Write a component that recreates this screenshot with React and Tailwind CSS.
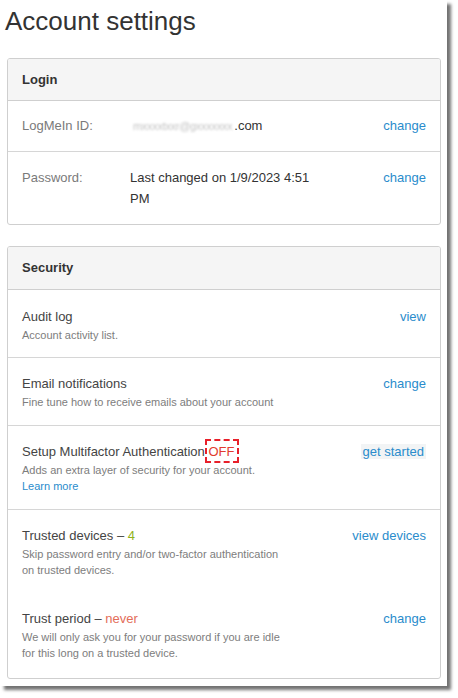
import React from 'react';

// ─── Shared bits ──────────────────────────────────────────────────────────────
const LINK = 'text-[#2a8ccc]';

function Panel({ title, headPad = 'pb-[10px]', children }) {
  return (
    <div className="ml-[7px] w-[434px] rounded-[3px] border border-[#cfcfcf] bg-white overflow-hidden">
      <div
        className={`bg-[#f5f5f5] border-b border-[#cfcfcf] px-[14px] pt-[11px] ${headPad} text-[13px] leading-[20px] font-bold text-[#333]`}
      >
        {title}
      </div>
      {children}
    </div>
  );
}

function LoginRow({ label, value, last }) {
  return (
    <div
      className={`flex items-start px-[14px] pt-[15px] pb-[15px] text-[13px] leading-[20px] ${
        last ? 'leading-[21px]' : 'border-b border-[#d6d6d6]'
      }`}
    >
      <div className="w-[108px] shrink-0 text-[#7a7a7a]">{label}</div>
      <div className="w-[192px] text-[#333]">{value}</div>
      <div className="ml-auto">
        <a className={LINK}>change</a>
      </div>
    </div>
  );
}

function SecRow({ title, desc, action, extra, divider = true, pad = 'pt-[16px] pb-[15px]', actionClass = '' }) {
  return (
    <div
      className={`flex items-start px-[14px] ${pad} text-[13px] leading-[20px] ${
        divider ? 'border-t border-[#d6d6d6]' : ''
      }`}
    >
      <div className="w-[266px]">
        <div className="text-[#444]">{title}</div>
        <div className="text-[11px] leading-[16px] text-[#7d7d7d]">{desc}</div>
        {extra}
      </div>
      <div className="ml-auto">
        <a className={`${LINK} ${actionClass}`}>{action}</a>
      </div>
    </div>
  );
}

export default function App() {
  return (
    <div className="min-h-[698px] bg-white" style={{ fontFamily: '"Liberation Sans", Arial, sans-serif' }}>
      <div className="w-[447px] h-[686px] bg-white shadow-[4px_4px_3px_rgba(0,0,0,0.55)]">
        <h1 className="pl-[5px] pt-[7px] text-[26px] leading-[29px] font-normal text-[#333]">
          Account settings
        </h1>

        <div className="mt-[22px]">
          <Panel title="Login">
            <LoginRow
              label="LogMeIn ID:"
              value={
                <>
                  <span className="ml-[3px] text-[#c4c4c4] blur-[1.2px] text-[11px] tracking-[-0.3px]">
                    mxxxxtxxr@gxxxxxxx
                  </span>
                  <span className="ml-[2px]">.com</span>
                </>
              }
            />
            <LoginRow label="Password:" value="Last changed on 1/9/2023 4:51 PM" last />
          </Panel>
        </div>

        <div className="mt-[21px]">
          <Panel title="Security" headPad="pb-[11px]">
            <SecRow
              title="Audit log"
              desc="Account activity list."
              action="view"
              divider={false}
              pad="pt-[17px] pb-[14px]"
            />
            <SecRow
              title="Email notifications"
              desc="Fine tune how to receive emails about your account"
              action="change"
            />
            <SecRow
              title={
                <>
                  Setup Multifactor Authentication{' '}
                  <span className="relative text-[#e23b2e]">
                    OFF
                    <span className="absolute -left-[3px] -right-[5px] -top-[5px] -bottom-[4px] border-[2.5px] border-dashed border-[#e8202a]" />
                  </span>
                </>
              }
              desc="Adds an extra layer of security for your account."
              extra={<a className="block text-[11px] leading-[16px] text-[#2a8ccc]">Learn more</a>}
              action="get started"
              actionClass="bg-[#f2f4f5] px-[2px]"
            />
            <SecRow
              title={
                <>
                  Trusted devices – <span className="text-[#8fb21c]">4</span>
                </>
              }
              desc="Skip password entry and/or two-factor authentication on trusted devices."
              action="view devices"
            />
            <SecRow
              title={
                <>
                  Trust period – <span className="text-[#e36d5a]">never</span>
                </>
              }
              desc="We will only ask you for your password if you are idle for this long on a trusted device."
              action="change"
              divider={false}
              pad="pt-[16px] pb-[17px]"
            />
          </Panel>
        </div>
      </div>
    </div>
  );
}
